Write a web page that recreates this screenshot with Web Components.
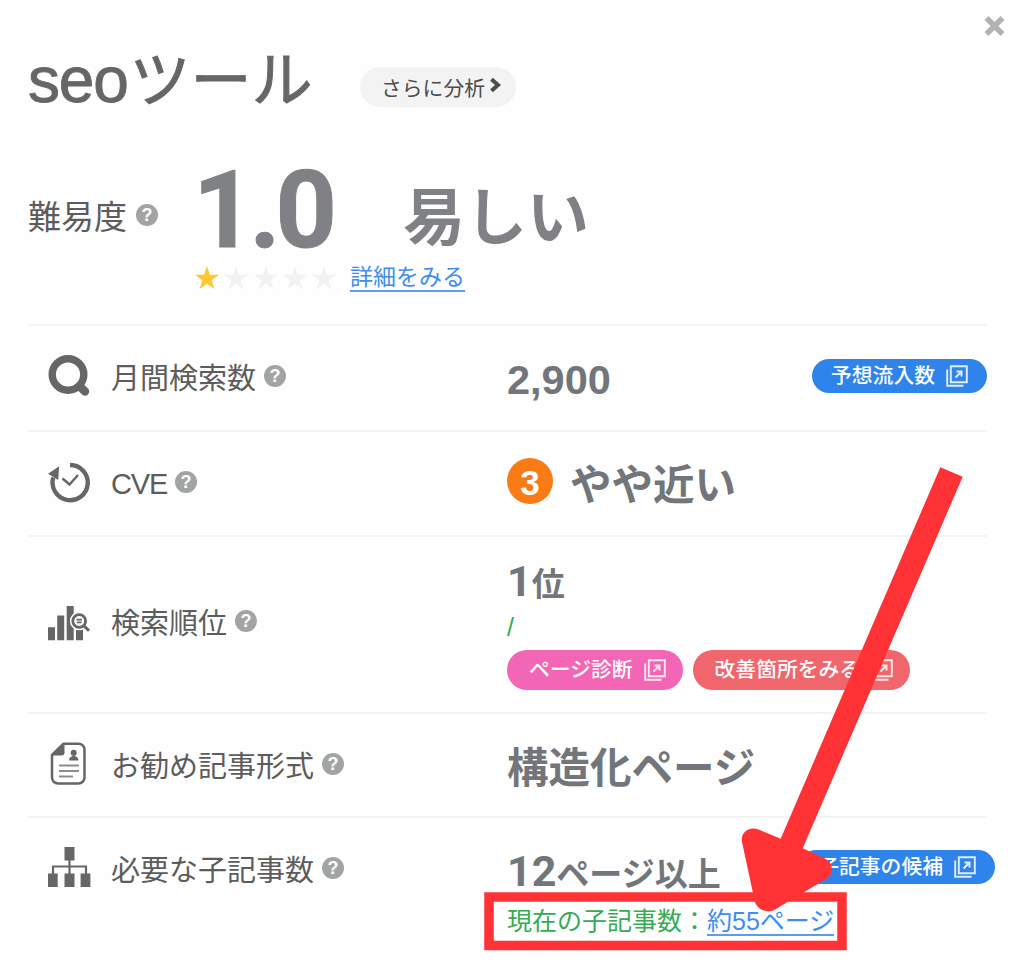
<!DOCTYPE html>
<html lang="ja">
<head>
<meta charset="utf-8">
<title>seoツール</title>
<style>
	body {
		margin: 0;
		background: #fefefe;
		font-family: "Liberation Sans", "Noto Sans CJK JP", sans-serif;
	}
</style>
</head>
<body>
<keyword-panel>
	<keyword-head slot="head">
		<span slot="latin">seo</span>ツール
		<more-button slot="action">さらに分析</more-button>
	</keyword-head>

	<difficulty-score slot="head" stars="1">
		<span slot="label">難易度</span>
		<span slot="score">1.0</span>
		<span slot="level">易しい</span>
		<text-link slot="link">詳細をみる</text-link>
	</difficulty-score>

	<metric-row icon="search" style="--row:104px;--up:5px;--down:4px">
		<span slot="label">月間検索数</span>
		<metric-value>2,900</metric-value>
		<pill-link slot="action">予想流入数</pill-link>
	</metric-row>

	<metric-row icon="clock" style="--row:103px;--up:4px;--down:4px">
		<span slot="label" style="letter-spacing:-1.2px;padding-top:4px">CVE</span>
		<metric-value><level-badge slot="badge">3</level-badge>やや近い</metric-value>
	</metric-row>

	<metric-row icon="rank" style="--row:175px;--up:8px;--down:0px">
		<span slot="label">検索順位</span>
		<metric-value class="figure">1<metric-unit>位</metric-unit></metric-value>
		<sub-note style="padding:4px 0 10px">/</sub-note>
		<pill-group style="margin-bottom:4px">
			<pill-link style="--pill:#f366b5;--pill-h:40px;--pill-x:22px;--pill-end:17px">ページ診断</pill-link>
			<pill-link style="--pill:#f1666d;--pill-h:40px;--pill-x:22px;--pill-end:17px">改善箇所をみる</pill-link>
		</pill-group>
	</metric-row>

	<metric-row icon="page" style="--row:102px;--up:3px;--down:7px">
		<span slot="label">お勧め記事形式</span>
		<metric-value>構造化ページ</metric-value>
	</metric-row>

	<metric-row icon="tree" style="--row:145px;--head-h:102px;--shift:8px;--up:3px;--down:0px">
		<span slot="label">必要な子記事数</span>
		<metric-value class="figure" style="margin-bottom:8px">12<metric-unit>ページ以上</metric-unit></metric-value>
		<sub-note>現在の子記事数：<text-link>約55ページ</text-link></sub-note>
		<pill-link slot="action">子記事の候補</pill-link>
	</metric-row>

	<arrow-mark slot="overlay"></arrow-mark>
</keyword-panel>

<script>
const define = (name, html) => customElements.define(name, class extends HTMLElement {
	constructor() {
		super()
		this.attachShadow({mode: 'open'})
		this.shadowRoot.innerHTML = typeof html === 'function' ? html(this) : html
	}
})

const ICONS = {
	search: /*html*/`
		<circle cx="20" cy="20.5" r="15.800" fill="none" stroke="#666" stroke-width="7.4"/>
		<path d="M32 32.500L37 37.500" stroke="#666" stroke-width="8.4" stroke-linecap="round"/>`,
	clock: /*html*/`
		<path d="M22 5A17.6 17.6 0 1 1 5.3 17.5" fill="none" stroke="#666" stroke-width="4.4"/>
		<path d="M0 13.800L11.200 6.200L10.200 20Z" fill="#666"/>
		<path d="M14.500 18.500L21.500 24.500L30 15" fill="none" stroke="#666" stroke-width="2.4"/>`,
	rank: /*html*/`
		<path d="M0 28.3h7v13H0zM9.200 16.500h7v24.800h-7zM18.700 7h7v34.300h-7zM28 29.500h7v11.800h-7z" fill="#666"/>
		<circle cx="31.200" cy="22" r="9.300" fill="#fefefe"/>
		<circle cx="31.200" cy="22" r="6.400" fill="none" stroke="#666" stroke-width="2.800"/>
		<path d="M35.800 26.600L41 31.800" stroke="#666" stroke-width="3"/>
		<path d="M28.400 20.600h5.600M28.900 23.400h4.600" stroke="#666" stroke-width="1.600"/>`,
	page: /*html*/`
		<path d="M15.500 1.700H30.500a6 6 0 0 1 6 6V35.500a6 6 0 0 1-6 6H10a6 6 0 0 1-6-6V13Z" fill="none" stroke="#666" stroke-width="2.500" stroke-linejoin="round"/>
		<path d="M16.500 2V10.500a3 3 0 0 1-3 3H4.500Z" fill="#666"/>
		<circle cx="25.700" cy="10.700" r="3" fill="#666"/>
		<path d="M21.200 18.500v-2q1-2 3.600-2.500v-2h1.800v2q2.700.5 3.600 2.500v2z" fill="#666"/>
		<path d="M11 23.500H31M11 29H31M11 34.500H25" stroke="#8a8d8f" stroke-width="2.200"/>`,
	tree: /*html*/`
		<path d="M16.500 1h10v13.500h-10zM0 27.500h9.700V41H0zM16.500 27.500h10V41h-10zM32.600 27.500h9.800V41h-9.800z" fill="#666"/>
		<path d="M21.500 14v14M5 28v-7.500H38V28" fill="none" stroke="#666" stroke-width="2.200"/>`
}

define('help-dot', /*html*/`
<style>
	:host {
		display: grid;
		place-items: center;
		width: 22px;
		height: 22px;
		border-radius: 50%;
		background: #a2a4a3;
		color: #fff;
		font: bold 18px/22px "Liberation Sans", sans-serif;
	}
</style>
<span>?</span>`)

define('text-link', /*html*/`
<style>
	:host {
		display: inline-block;
		color: #3f8df0;
		border-bottom: 2px solid #5b9cf2;
		cursor: pointer;
	}
</style>
<slot></slot>`)

define('more-button', /*html*/`
<style>
	:host {
		display: flex;
		align-items: center;
		box-sizing: border-box;
		width: 156px;
		height: 40px;
		padding-left: 21px;
		gap: 4px;
		border-radius: 20px;
		background: #f3f3f3;
		color: #4b4b4b;
		font-size: 20.800px;
		line-height: 40px;
		white-space: nowrap;
	}
	svg {
		margin-bottom: 4px;
	}
	span {
		padding-top: 3px;
	}
</style>
<span><slot></slot></span>
<svg width="12" height="16"><path d="M2.500 2.200L9 8L2.500 13.800" fill="none" stroke="#4b4b4b" stroke-width="4"/></svg>`)

define('keyword-head', /*html*/`
<style>
	:host {
		display: flex;
		height: 150px;
		box-sizing: border-box;
		padding-top: 40px;
		color: #666;
		font-size: 61px;
		line-height: 80px;
		white-space: nowrap;
		-webkit-text-stroke: .9px #666;
	}
	h1 {
		display: flex;
		align-items: baseline;
		width: 332px;
		margin: 0;
		font: inherit;
	}
	.latin {
		font-size: 64px;
		letter-spacing: -1.200px;
		margin-right: 2px;
	}
	.action {
		padding-top: 27px;
		-webkit-text-stroke: 0;
	}
</style>
<h1><span class="latin"><slot name="latin"></slot></span><slot></slot></h1>
<div class="action"><slot name="action"></slot></div>`)

define('difficulty-score', host => /*html*/`
<style>
	:host {
		display: grid;
		grid-template-columns: 167px 1fr;
		height: 174px;
		white-space: nowrap;
	}
	.label {
		display: flex;
		align-items: center;
		gap: 9px;
		height: 130px;
		color: #5c5c5c;
		font-size: 33px;
	}
	.top {
		display: flex;
		align-items: center;
		height: 114px;
		color: #808184;
		font-weight: bold;
	}
	.score {
		width: 210px;
		margin-left: -2px;
		padding-top: 6px;
		font-family: Roboto, "Liberation Sans", sans-serif;
		font-size: 107px;
		letter-spacing: -5px;
		-webkit-text-stroke: 1px #808184;
	}
	.level {
		padding-top: 12px;
		font-size: 62px;
	}
	.bottom {
		display: flex;
		align-items: center;
		height: 27px;
		font-size: 23px;
		line-height: 26px;
	}
	.stars {
		display: flex;
		width: 155px;
		gap: 5.300px;
	}
</style>
<div class="label"><slot name="label"></slot><help-dot></help-dot></div>
<div>
	<div class="top">
		<div class="score"><slot name="score"></slot></div>
		<div class="level"><slot name="level"></slot></div>
	</div>
	<div class="bottom">
		<div class="stars">${[0, 1, 2, 3, 4].map(i => /*html*/`
			<svg width="24" height="24" viewBox="0 0 24 24"><path
				d="M12 0L14.900 8.700H24L16.700 14.200L19.400 23L12 17.700L4.600 23L7.300 14.200L0 8.700H9.100Z"
				fill="${i < host.getAttribute('stars') ? '#ffc830' : '#f2f2f2'}"/></svg>`).join('')}
		</div>
		<slot name="link"></slot>
	</div>
</div>`)

define('pill-link', /*html*/`
<style>
	:host {
		display: inline-flex;
		align-items: center;
		box-sizing: border-box;
		height: var(--pill-h, 34px);
		padding: 0 var(--pill-end, 19px) 0 var(--pill-x, 19px);
		gap: 11px;
		border-radius: 20px;
		background: var(--pill, #2e84ea);
		color: #fff;
		font-size: 20.800px;
		font-weight: 500;
		line-height: 30px;
		white-space: nowrap;
		cursor: pointer;
	}
</style>
<slot></slot>
<svg width="22" height="22" fill="none" stroke="#fff" stroke-width="1.900" opacity=".85">
	<path d="M4.800 1.200H20.800V17.200H4.800ZM1.200 4.500V20.800H17.500"/>
	<path d="M9.500 12.500L15 7M10.500 6.500H15.500V11.500" stroke-width="2"/>
</svg>`)

define('pill-group', /*html*/`
<style>
	:host {
		display: flex;
		gap: 10px;
	}
</style>
<slot></slot>`)

define('level-badge', /*html*/`
<style>
	:host {
		display: grid;
		place-items: center;
		box-sizing: border-box;
		width: 46px;
		height: 46px;
		padding-top: 4px;
		margin: 0 17px 10px 0;
		border-radius: 50%;
		background: #f97b16;
		color: #fff;
		font-size: 35px;
		line-height: 40px;
	}
</style>
<slot></slot>`)

define('metric-unit', /*html*/`
<style>
	:host {
		display: inline-block;
		font-size: 33px;
	}
</style>
<slot></slot>`)

define('metric-value', /*html*/`
<style>
	:host {
		display: flex;
		align-items: center;
		color: #72767a;
		font-size: 41.500px;
		font-weight: bold;
		line-height: 50px;
		white-space: nowrap;
	}
	:host(.figure) {
		font-family: Roboto, "Noto Sans CJK JP", sans-serif;
		font-size: 43px;
	}
</style>
<slot name="badge"></slot><div><slot></slot></div>`)

define('sub-note', /*html*/`
<style>
	:host {
		display: block;
		color: #35ab52;
		font-size: 25px;
		line-height: 26px;
		white-space: nowrap;
	}
</style>
<slot></slot>`)

define('metric-row', host => /*html*/`
<style>
	:host {
		display: grid;
		grid-template-columns: 83px 396px minmax(0, 1fr) auto;
		height: var(--row);
		border-top: 2px solid #f2f3f4;
	}
	.icon, .label, .action {
		display: flex;
		align-items: center;
		box-sizing: border-box;
		height: var(--head-h, 100%);
	}
	.icon {
		padding: 0 0 var(--up) 20px;
	}
	.label {
		gap: 8px;
		padding-bottom: calc(var(--up) - 1px);
		color: #5c5c5c;
		font-size: 29px;
		white-space: nowrap;
	}
	.value {
		display: flex;
		flex-direction: column;
		justify-content: center;
		padding-top: var(--down);
	}
	.action {
		margin-right: calc(var(--shift, 0px) * -1);
	}
	.action ::slotted(*) {
		margin-bottom: 4px;
	}
</style>
<div class="icon"><svg width="43" height="43" viewBox="0 0 43 43">${ICONS[host.getAttribute('icon')]}</svg></div>
<div class="label"><slot name="label"></slot><help-dot></help-dot></div>
<div class="value"><slot></slot></div>
<div class="action"><slot name="action"></slot></div>`)

define('arrow-mark', /*html*/`
<style>
	:host {
		position: absolute;
		inset: 0;
		pointer-events: none;
	}
</style>
<svg width="1024" height="980" fill="#ff3235">
	<rect x="489" y="897" width="353" height="48.500" fill="none" stroke="#ff3235" stroke-width="9.500"/>
	<path d="M940.300 467.300L962.700 476.700L802.700 848.300L825 858.500C834 863 834 874 826 879L776 909C768 914 757 910 754.700 901L742 842C740 832 750 826 758.500 829.500L780.700 838.700Z"/>
</svg>`)

define('keyword-panel', /*html*/`
<style>
	:host {
		display: block;
		position: relative;
		box-sizing: border-box;
		width: 1024px;
		height: 980px;
		padding: 0 37px 0 28px;
		overflow: hidden;
	}
	.close {
		position: absolute;
		top: 14px;
		right: 18px;
	}
</style>
<svg class="close" width="23" height="24"><path d="M3.500 4L19.500 20M19.500 4L3.500 20" stroke="#b0b3b2" stroke-width="5.500"/></svg>
<slot name="head"></slot>
<slot></slot>
<slot name="overlay"></slot>`)
</script>
</body>
</html>
